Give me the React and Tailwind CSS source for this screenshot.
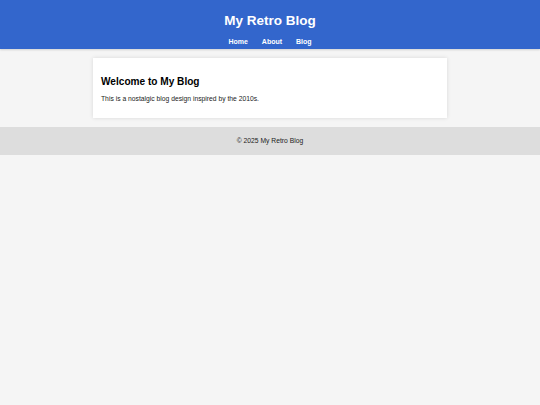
import React from 'react';

export default function App() {
  return (
    <div className="min-h-[405px] bg-[#f5f5f5] font-['Liberation_Sans',Arial,sans-serif] text-[#222]">
      <header className="h-[49px] bg-[#3366cc] text-white text-center shadow-[0_1px_2px_rgba(0,0,0,0.15)]">
        <h1 className="pt-[12px] text-[13.5px] leading-[18px] font-bold">My Retro Blog</h1>
        <nav className="mt-[7px] flex justify-center gap-[14px] text-[7px] leading-[10px] font-bold">
          <a href="#">Home</a>
          <a href="#">About</a>
          <a href="#">Blog</a>
        </nav>
      </header>

      <main className="w-[354px] mx-auto mt-[9px]">
        <div className="bg-white px-[8px] pt-[18px] pb-[15px] shadow-[0_0_4px_rgba(0,0,0,0.12)]">
          <h2 className="text-[10.1px] leading-[12px] font-bold text-black">Welcome to My Blog</h2>
          <p className="mt-[6px] text-[6.75px] leading-[9px] text-[#222]">
            This is a nostalgic blog design inspired by the 2010s.
          </p>
        </div>
      </main>

      <footer className="mt-[9px] h-[28px] bg-[#dddddd] flex items-center justify-center pt-[1px] text-[6.75px] text-[#222]">
        © 2025 My Retro Blog
      </footer>
    </div>
  );
}
